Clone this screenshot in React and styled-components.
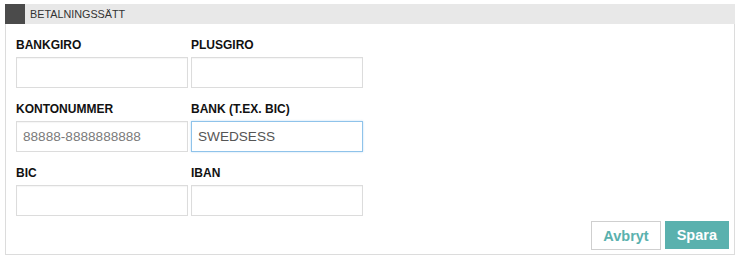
import React, { useEffect, useRef } from 'react';
import styled, { createGlobalStyle } from 'styled-components';

const GlobalStyle = createGlobalStyle`
  body {
    margin: 0;
    background: #fff;
    font-family: "Liberation Sans", Arial, sans-serif;
  }
`;

const Sida = styled.div`
  padding: 4px 5px 0;
  width: 730px;
`;

const Rubrik = styled.div`
  display: flex;
  align-items: center;
  height: 20px;
  background-color: #e8e8e8;
`;

const Ruta = styled.div`
  width: 20px;
  height: 20px;
  background-color: #4b4b4b;
`;

const RubrikText = styled.span`
  margin-left: 5px;
  font-size: 10.8px;
  color: #333;
  text-transform: uppercase;
`;

const Panel = styled.div`
  border: 1px solid #dcdcdc;
  border-top: none;
  padding: 14px 5px 4px 10px;
`;

const Rutnat = styled.div`
  display: grid;
  grid-template-columns: 172px 172px;
  column-gap: 3px;
  row-gap: 14px;
`;

const Falt = styled.div`
  display: flex;
  flex-direction: column;
`;

const Etikett = styled.label`
  font-size: 12px;
  line-height: 14px;
  font-weight: bold;
  color: #111;
  margin-bottom: 5px;
`;

const Inmatning = styled.input`
  box-sizing: border-box;
  width: 172px;
  height: 31px;
  padding: 0 6px;
  border: 1px solid ${(props) => (props.$aktiv ? '#8fc3ea' : '#dcdcdc')};
  box-shadow: ${(props) => (props.$aktiv ? '0 0 2px rgba(102, 175, 233, 0.4)' : 'inset 0 1px 1px rgba(0, 0, 0, 0.04)')};
  font-family: "Liberation Sans", Arial, sans-serif;
  font-size: 13.6px;
  color: #555;
  caret-color: #222;
  outline: none;
  &::placeholder {
    color: #7a7a7a;
  }
`;

const Knapprad = styled.div`
  display: flex;
  justify-content: flex-end;
  gap: 4px;
  margin-top: 5px;
`;

const Knapp = styled.button`
  height: ${(props) => (props.$primar ? '28px' : '29px')};
  padding: 0 11px;
  font-family: "Liberation Sans", Arial, sans-serif;
  font-size: 14.5px;
  font-weight: bold;
  cursor: pointer;
  border: 1px solid ${(props) => (props.$primar ? '#5ab1ae' : '#cfcfcf')};
  background-color: ${(props) => (props.$primar ? '#5ab1ae' : '#fff')};
  color: ${(props) => (props.$primar ? '#fff' : '#5ab1ae')};
`;

const falt = [
  { etikett: 'Bankgiro' },
  { etikett: 'Plusgiro' },
  { etikett: 'Kontonummer', placeholder: '88888-8888888888' },
  { etikett: 'Bank (t.ex. BIC)', varde: 'SWEDSESS', aktiv: true },
  { etikett: 'BIC' },
  { etikett: 'IBAN' },
];

const App = () => {
  const aktivRef = useRef(null);

  useEffect(() => {
    const el = aktivRef.current;
    if (el) {
      el.focus();
      el.setSelectionRange(el.value.length, el.value.length);
    }
  }, []);

  return (
    <Sida>
      <GlobalStyle />
      <Rubrik>
        <Ruta />
        <RubrikText>Betalningssätt</RubrikText>
      </Rubrik>
      <Panel>
        <Rutnat>
          {falt.map((f) => (
            <Falt key={f.etikett}>
              <Etikett>{f.etikett.toUpperCase()}</Etikett>
              <Inmatning
                ref={f.aktiv ? aktivRef : undefined}
                type="text"
                placeholder={f.placeholder}
                defaultValue={f.varde}
                $aktiv={f.aktiv}
              />
            </Falt>
          ))}
        </Rutnat>
        <Knapprad>
          <Knapp>Avbryt</Knapp>
          <Knapp $primar>Spara</Knapp>
        </Knapprad>
      </Panel>
    </Sida>
  );
};

export default App;
